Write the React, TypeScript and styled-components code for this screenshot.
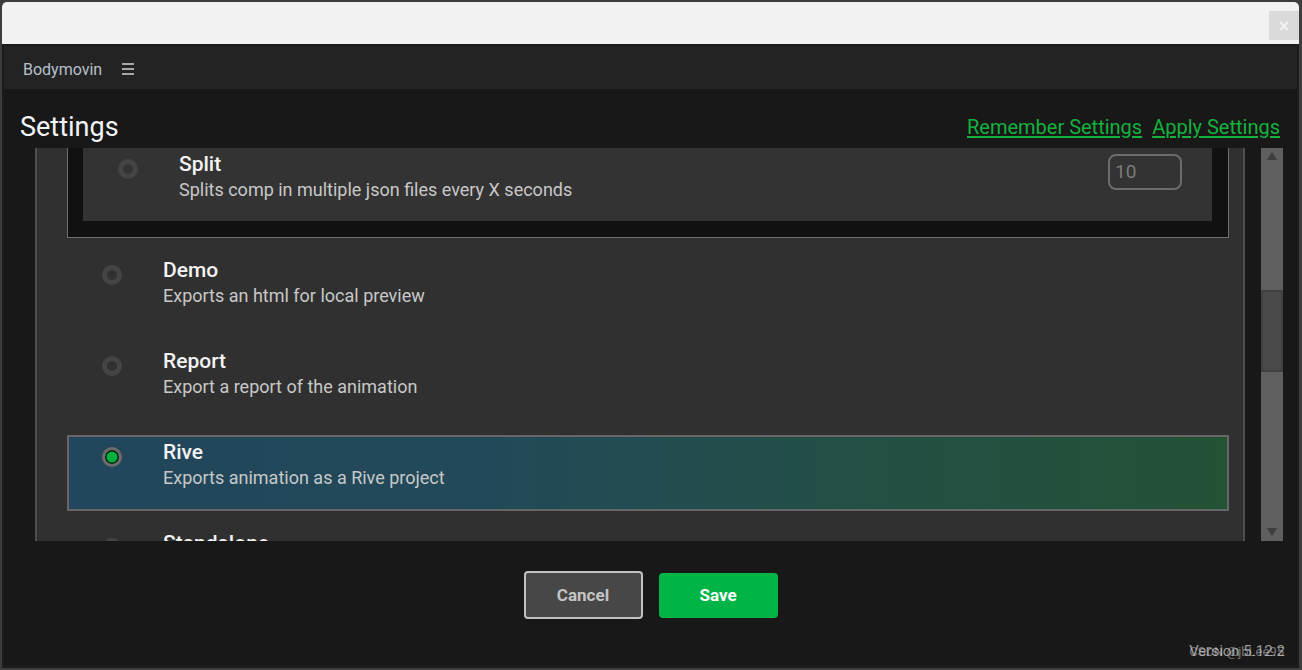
import React from "react";
import styled, { createGlobalStyle } from "styled-components";

const Global = createGlobalStyle`
  html, body { margin: 0; padding: 0; }
  body {
    background: #3d3d3d;
    font-family: Roboto, "Noto Sans", "Liberation Sans", sans-serif;
    width: 1302px;
    height: 670px;
    overflow: hidden;
  }
  * { box-sizing: border-box; }
`;

const Window = styled.div`
  margin: 2px 0 0 2px;
  width: 1297px;
  height: 666px;
  background: #1c1c1c;
  border-radius: 5px 5px 0 0;
  overflow: hidden;
  display: flex;
  flex-direction: column;
`;

const TitleBar = styled.div`
  height: 42px;
  flex: none;
  background: #f2f2f2;
  display: flex;
  justify-content: flex-end;
  align-items: flex-start;
  padding-top: 9px;
  margin-bottom: 2px;
`;

const CloseButton = styled.div`
  width: 30px;
  height: 29px;
  background: #dadada;
  color: #f4f4f4;
  font-family: "DejaVu Sans", sans-serif;
  font-size: 15px;
  font-weight: bold;
  display: flex;
  align-items: center;
  justify-content: center;
`;

const App = styled.div`
  flex: 1;
  margin: 0 2px 3px 2px;
  display: flex;
  flex-direction: column;
  min-height: 0;
`;

const Header = styled.div`
  height: 43px;
  flex: none;
  background: #232323;
  display: flex;
  align-items: center;
  padding: 4px 0 0 19px;
  gap: 20px;
`;

const Brand = styled.span`
  font-size: 16px;
  color: #b7c0ca;
`;

const Burger = styled.div`
  width: 12px;
  display: flex;
  flex-direction: column;
  gap: 3px;
  margin-top: -1px;
  span {
    display: block;
    height: 2px;
    background: #a8a8a8;
  }
`;

const Body = styled.div`
  flex: 1;
  background: #181818;
  display: flex;
  flex-direction: column;
  position: relative;
  min-height: 0;
`;

const TitleRow = styled.div`
  height: 59px;
  flex: none;
  padding: 22px 17px 0 16px;
  display: flex;
  align-items: flex-start;
  justify-content: space-between;
`;

const PageTitle = styled.h1`
  margin: 0;
  font-size: 27px;
  line-height: 32px;
  font-weight: 400;
  color: #f2f4f7;
`;

const Links = styled.div`
  display: flex;
  gap: 10px;
  line-height: 32px;
`;

const Link = styled.a`
  font-size: 20px;
  color: #14b23d;
  text-decoration: underline;
  text-underline-offset: 2px;
  cursor: pointer;
`;

const ScrollRow = styled.div`
  height: 393px;
  flex: none;
  display: flex;
  gap: 16px;
  padding: 0 14px 0 31px;
`;

const Panel = styled.div`
  flex: 1;
  background: #303030;
  border-left: 2px solid #4e4e4e;
  border-right: 2px solid #4e4e4e;
  padding: 0 14px 0 30px;
  overflow: hidden;
`;

const Group = styled.div`
  background: #111111;
  border: 1px solid #707070;
  border-top: none;
  padding: 0 16px 16px 15px;
`;

const Row = styled.div<{ $nested?: boolean; $selected?: boolean }>`
  display: flex;
  align-items: flex-start;
  height: ${(p) => (p.$nested ? "73px" : "76px")};
  margin-top: ${(p) => (p.$nested ? "0" : "15px")};
  padding: ${(p) => (p.$nested ? "3px" : "2px")} 0 0 ${(p) => (p.$nested ? "35px" : "33px")};
  border: ${(p) =>
    p.$nested ? "none" : `2px solid ${p.$selected ? "#666666" : "transparent"}`};
  background: ${(p) =>
    p.$nested
      ? "#333333"
      : p.$selected
      ? "linear-gradient(90deg, #22465b 0%, #22495a 35%, #234f47 65%, #245235 100%)"
      : "transparent"};
`;

const Radio = styled.div<{ $checked?: boolean }>`
  flex: none;
  width: 20px;
  height: 20px;
  margin-top: 8px;
  border-radius: 50%;
  border: ${(p) => (p.$checked ? "3px solid #6b6b6b" : "5px solid #444444")};
  background: ${(p) => (p.$checked ? "#00b13c" : "transparent")};
  box-shadow: ${(p) => (p.$checked ? "inset 0 0 0 1.5px #111" : "none")};
`;

const Texts = styled.div`
  flex: 1;
  margin-left: 41px;
  display: flex;
  flex-direction: column;
`;

const OptTitle = styled.div`
  font-size: 21px;
  line-height: 26px;
  font-weight: 500;
  color: #f3f3f3;
`;

const OptDesc = styled.div`
  font-size: 18px;
  line-height: 26px;
  color: #c8c8c8;
`;

const NumberBox = styled.div`
  flex: none;
  width: 74px;
  height: 36px;
  margin: 3px 30px 0 0;
  border: 2px solid #6c6c6c;
  border-radius: 8px;
  color: #7a7a7a;
  font-size: 19px;
  line-height: 32px;
  padding-left: 5px;
`;

const ScrollBar = styled.div`
  width: 22px;
  flex: none;
  background: #5f5f5f;
  display: flex;
  flex-direction: column;
  align-items: center;
`;

const Arrow = styled.div<{ $down?: boolean }>`
  width: 0;
  height: 0;
  border-left: 5px solid transparent;
  border-right: 5px solid transparent;
  ${(p) =>
    p.$down
      ? "border-top: 8px solid #3f3f3f; margin-top: auto; margin-bottom: 5px;"
      : "border-bottom: 8px solid #3f3f3f; margin-top: 4px;"}
`;

const Thumb = styled.div`
  width: 22px;
  height: 82px;
  margin-top: 130px;
  background: #4a4a4a;
  border: 2px solid #404040;
`;

const Buttons = styled.div`
  display: flex;
  justify-content: center;
  align-items: center;
  gap: 16px;
  padding-top: 30px;
`;

const Button = styled.button<{ $primary?: boolean }>`
  width: 119px;
  height: ${(p) => (p.$primary ? "45px" : "48px")};
  border-radius: 4px;
  font-family: Roboto, "Liberation Sans", sans-serif;
  font-size: 17px;
  font-weight: 700;
  cursor: pointer;
  border: ${(p) => (p.$primary ? "none" : "2px solid #c2c2c2")};
  background: ${(p) => (p.$primary ? "#00b545" : "#474747")};
  color: ${(p) => (p.$primary ? "#ffffff" : "#c4c4c4")};
`;

const Version = styled.div`
  margin-top: auto;
  align-self: flex-end;
  padding: 0 12px 5px 0;
  font-size: 15px;
  line-height: 17px;
  color: #9a9a9a;
`;

const Watermark = styled.div`
  position: absolute;
  right: 13px;
  bottom: 6px;
  font-size: 13px;
  line-height: 15px;
  color: rgba(215, 215, 215, 0.5);
  pointer-events: none;
`;

type Opt = { title: string; desc: string; selected?: boolean };

const options: Opt[] = [
  { title: "Demo", desc: "Exports an html for local preview" },
  { title: "Report", desc: "Export a report of the animation" },
  { title: "Rive", desc: "Exports animation as a Rive project", selected: true },
  { title: "Standalone", desc: "Exports the animation as a standalone file" },
];

export default function AppRoot() {
  return (
    <>
      <Global />
      <Window>
        <TitleBar>
          <CloseButton>×</CloseButton>
        </TitleBar>
        <App>
          <Header>
            <Brand>Bodymovin</Brand>
            <Burger>
              <span />
              <span />
              <span />
            </Burger>
          </Header>
          <Body>
            <TitleRow>
              <PageTitle>Settings</PageTitle>
              <Links>
                <Link>Remember Settings</Link>
                <Link>Apply Settings</Link>
              </Links>
            </TitleRow>
            <ScrollRow>
              <Panel>
                <Group>
                  <Row $nested>
                    <Radio />
                    <Texts>
                      <OptTitle>Split</OptTitle>
                      <OptDesc>Splits comp in multiple json files every X seconds</OptDesc>
                    </Texts>
                    <NumberBox>10</NumberBox>
                  </Row>
                </Group>
                {options.map((o) => (
                  <Row key={o.title} $selected={o.selected}>
                    <Radio $checked={o.selected} />
                    <Texts>
                      <OptTitle>{o.title}</OptTitle>
                      <OptDesc>{o.desc}</OptDesc>
                    </Texts>
                  </Row>
                ))}
              </Panel>
              <ScrollBar>
                <Arrow />
                <Thumb />
                <Arrow $down />
              </ScrollBar>
            </ScrollRow>
            <Buttons>
              <Button>Cancel</Button>
              <Button $primary>Save</Button>
            </Buttons>
            <Version>Version 5.12.2</Version>
            <Watermark>CSDN @jbLee95</Watermark>
          </Body>
        </App>
      </Window>
    </>
  );
}
